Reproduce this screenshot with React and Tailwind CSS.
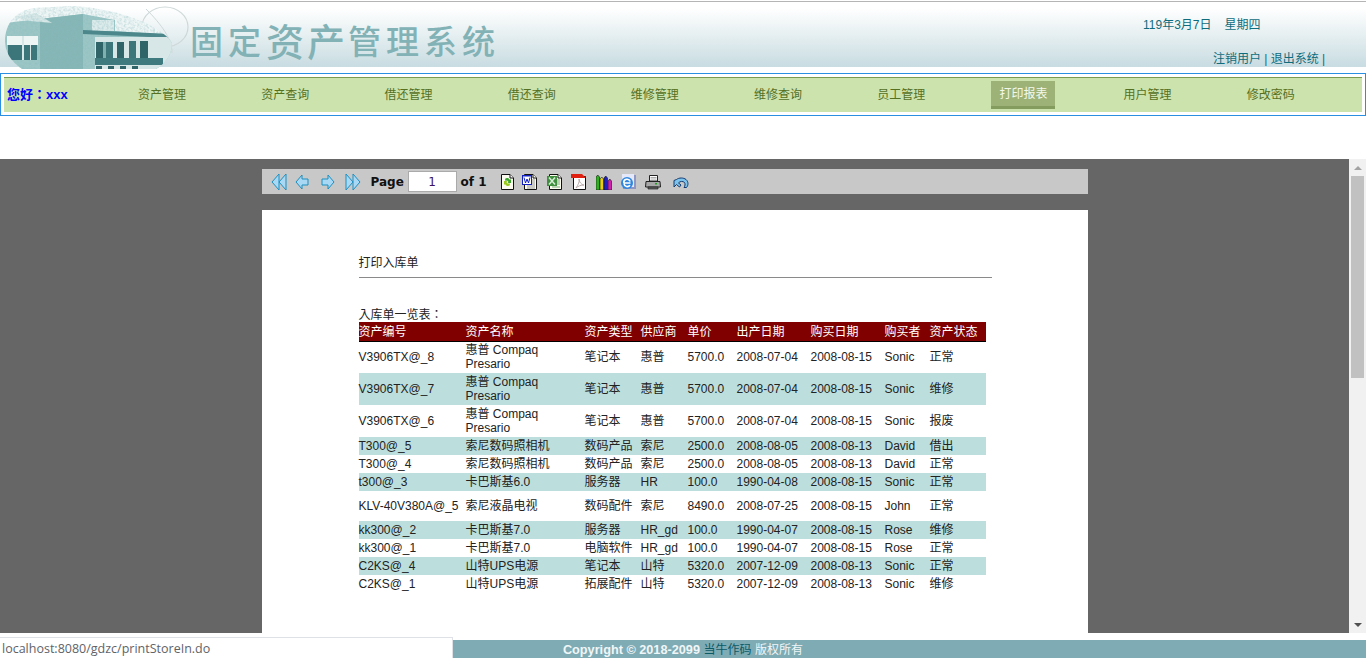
import React from "react";

const NAV = ["资产管理", "资产查询", "借还管理", "借还查询", "维修管理", "维修查询", "员工管理", "打印报表", "用户管理", "修改密码"];

const ROWS = [
  ["V3906TX@_8", "惠普 Compaq Presario", "笔记本", "惠普", "5700.0", "2008-07-04", "2008-08-15", "Sonic", "正常", "h-[32px]", ""],
  ["V3906TX@_7", "惠普 Compaq Presario", "笔记本", "惠普", "5700.0", "2008-07-04", "2008-08-15", "Sonic", "维修", "h-[32px]", "bg-[#bcdfdd]"],
  ["V3906TX@_6", "惠普 Compaq Presario", "笔记本", "惠普", "5700.0", "2008-07-04", "2008-08-15", "Sonic", "报废", "h-[32px]", ""],
  ["T300@_5", "索尼数码照相机", "数码产品", "索尼", "2500.0", "2008-08-05", "2008-08-13", "David", "借出", "h-[18px]", "bg-[#bcdfdd]"],
  ["T300@_4", "索尼数码照相机", "数码产品", "索尼", "2500.0", "2008-08-05", "2008-08-13", "David", "正常", "h-[18px]", ""],
  ["t300@_3", "卡巴斯基6.0", "服务器", "HR", "100.0", "1990-04-08", "2008-08-15", "Sonic", "正常", "h-[18px]", "bg-[#bcdfdd]"],
  ["KLV-40V380A@_5", "索尼液晶电视", "数码配件", "索尼", "8490.0", "2008-07-25", "2008-08-15", "John", "正常", "h-[30px]", ""],
  ["kk300@_2", "卡巴斯基7.0", "服务器", "HR_gd", "100.0", "1990-04-07", "2008-08-15", "Rose", "维修", "h-[18px]", "bg-[#bcdfdd]"],
  ["kk300@_1", "卡巴斯基7.0", "电脑软件", "HR_gd", "100.0", "1990-04-07", "2008-08-15", "Rose", "正常", "h-[18px]", ""],
  ["C2KS@_4", "山特UPS电源", "笔记本", "山特", "5320.0", "2007-12-09", "2008-08-13", "Sonic", "正常", "h-[18px]", "bg-[#bcdfdd]"],
  ["C2KS@_1", "山特UPS电源", "拓展配件", "山特", "5320.0", "2007-12-09", "2008-08-13", "Sonic", "维修", "h-[18px]", ""],
];

const COLS = [107, 119, 56, 47, 49, 74, 74, 45, 56];
const HEAD = ["资产编号", "资产名称", "资产类型", "供应商", "单价", "出产日期", "购买日期", "购买者", "资产状态"];

function Building() {
  return (
    <svg width="190" height="66" viewBox="0 0 190 66" className="shrink-0">
      <defs>
        <clipPath id="blob">
          <path d="M5 38C5 20 16 8 34 5L70 3C110 4 160 20 172 40C172 52 166 60 156 66L22 66C10 58 5 48 5 38Z" />
        </clipPath>
        <filter id="mottle" x="0" y="0" width="100%" height="100%">
          <feTurbulence type="fractalNoise" baseFrequency="0.45" numOctaves="2" seed="4" />
          <feColorMatrix values="0 0 0 0 0.25  0 0 0 0 0.5  0 0 0 0 0.52  0 0 0 1.6 -0.62" />
        </filter>
      </defs>
      <ellipse cx="165" cy="24" rx="23" ry="20" fill="none" stroke="#cfd8d8" strokeWidth="1.2" />
      <path d="M146 6C162 22 172 36 172 50" fill="none" stroke="#cfd8d8" />
      <g clipPath="url(#blob)">
        <rect x="0" y="0" width="190" height="66" fill="#eef5f5" />
        <path d="M5 20L83 11L115 17V28L172 32V66H5Z" fill="#9cc6c6" />
        <path d="M40 16L83 11V66H40Z" fill="#86b6b6" />
        <path d="M14 14L36 10L52 20L30 18Z" fill="#d8e8e8" />
        <rect x="92" y="17" width="22" height="11" fill="#dcebeb" />
        <rect x="5" y="0" width="167" height="66" filter="url(#mottle)" opacity=".55" />
        <path d="M83 27L172 31V35L83 31Z" fill="#4b878b" />
        <rect x="95" y="34" width="77" height="32" fill="#d7e6e6" />
        <rect x="96" y="39" width="7" height="16" fill="#2f6468" />
        <rect x="103" y="39" width="3" height="16" fill="#7fb0b0" />
        <rect x="106" y="39" width="7" height="16" fill="#3d767a" />
        <rect x="117" y="39" width="7" height="16" fill="#2f6468" />
        <rect x="129" y="38" width="7" height="17" fill="#3d767a" />
        <rect x="140" y="38" width="8" height="17" fill="#2f6468" />
        <rect x="95" y="55" width="68" height="7" fill="#3f7a7e" />
        <rect x="96" y="63" width="6" height="3" fill="#2f6468" />
        <rect x="108" y="63" width="6" height="3" fill="#2f6468" />
        <rect x="120" y="63" width="6" height="3" fill="#2f6468" />
        <rect x="132" y="63" width="6" height="3" fill="#2f6468" />
        <rect x="7" y="33" width="31" height="9" fill="#eef5f5" />
        <rect x="8" y="42" width="29" height="15" fill="#3d767a" />
        <rect x="22" y="33" width="2" height="24" fill="#d7e6e6" />
        <rect x="30" y="42" width="1" height="15" fill="#d7e6e6" />
      </g>
    </svg>
  );
}

function Header() {
  return (
    <div className="mt-px h-[66px] border-t border-[#b5b5b5] bg-gradient-to-b from-white from-10% to-[#c8dce1] flex">
      <div className="w-[190px] pt-px flex">
        <Building />
      </div>
      <div className="flex-1 pt-[15px] text-[#82b2b5] font-['Noto_Sans_CJK_SC',sans-serif] font-medium text-[33px] leading-[44px] flex items-center h-[60px] tracking-[5px]">
        <span>固定</span>
        <span className="text-[38px] tracking-[3px]">资产</span>
        <span>管理系统</span>
      </div>
      <div className="w-[223px] text-[12px] text-[#0e6c7c] pt-[15px]">
        <div className="leading-[16px]">119年3月7日<span className="ml-[13px]">星期四</span></div>
        <div className="mt-[18px] pl-[70px] leading-[16px]">注销用户 | 退出系统 |</div>
      </div>
    </div>
  );
}

function Nav() {
  return (
    <div className="mt-[6px] h-[43px] border border-[#2a8fe0] px-[3px] pt-[3px] pb-[3px]">
      <div className="h-[35px] border-t border-[#7b9a50] bg-[#cde3ae] flex items-center">
        <div className="w-[96.5px] pl-[3px] text-[13px] font-bold text-[#0000ff] font-['Liberation_Sans','Noto_Sans_CJK_TC',sans-serif]">您好：xxx</div>
        {NAV.map((n) =>
          n === "打印报表" ? (
            <div key={n} className="w-[123.2px] flex justify-center pr-[2px]">
              <span className="w-[64px] h-[28px] bg-[#9db277] border-b-[3px] border-[#849c5d] text-[#f4f8ea] text-[12px] flex items-center justify-center">{n}</span>
            </div>
          ) : (
            <div key={n} className="w-[123.2px] text-center text-[12px] text-[#55701f]">{n}</div>
          )
        )}
      </div>
    </div>
  );
}

function DoubleArrow({ flip }) {
  return (
    <svg width="16" height="18" viewBox="0 0 16 18" className={flip ? "-scale-x-100" : ""}>
      <path d="M8 1L1 9L8 17V1Z" fill="#a8d8f4" stroke="#1c8fc0" />
      <path d="M15 1L8 9L15 17V1Z" fill="#a8d8f4" stroke="#1c8fc0" />
    </svg>
  );
}

function SingleArrow({ flip }) {
  return (
    <svg width="14" height="16" viewBox="0 0 14 16" className={flip ? "-scale-x-100" : ""}>
      <path d="M7 1L1 8L7 15V11H13V5H7V1Z" fill="#a8d8f4" stroke="#1c8fc0" />
    </svg>
  );
}

function Sheet({ children }) {
  return (
    <svg width="16" height="16" viewBox="0 0 16 16" className="block">
      <path d="M2.500 .5H11L14.500 4V15.500H2.500Z" fill="#fbfbf0" stroke="#111" />
      <path d="M11 .5V4H14.500" fill="#fff" stroke="#111" />
      {children}
    </svg>
  );
}

function Toolbar() {
  return (
    <div className="h-[25px] bg-[#c8c8c8] flex items-center">
      <div className="ml-[9px] shrink-0"><DoubleArrow /></div>
      <div className="ml-[8px] shrink-0"><SingleArrow /></div>
      <div className="ml-[12px] shrink-0"><SingleArrow flip /></div>
      <div className="ml-[10px] shrink-0"><DoubleArrow flip /></div>
      <span className="ml-[10px] w-[37px] shrink-0 text-[12px] font-bold font-['DejaVu_Sans',sans-serif] text-[#111]">Page</span>
      <input
        readOnly
        value="1"
        className="w-[49px] h-[21px] shrink-0 bg-white border border-[#aaaaaa] text-center text-[12px] text-[#401060] font-['DejaVu_Sans',sans-serif]"
      />
      <span className="ml-[4px] w-[26px] shrink-0 whitespace-nowrap text-[12px] font-bold font-['DejaVu_Sans',sans-serif] text-[#111]">of 1</span>

      {/* reload */}
      <div className="ml-[12px] shrink-0">
        <Sheet>
          <path d="M6 5a3 3 0 0 1 5 1l1-1v4H8.500l1-1a2 2 0 0 0-3-1Z" fill="#3aa82a" />
          <path d="M11 11a3 3 0 0 1-5-1l-1 1V7h3.500l-1 1a2 2 0 0 0 3 1Z" fill="#9ac81c" />
        </Sheet>
      </div>
      {/* word */}
      <div className="ml-[7px] shrink-0">
        <Sheet>
          <path d="M10 6h3M10 8h3M10 10h3M5 12h8M5 14h8" stroke="#9a9a9a" />
          <rect x="0" y="1" width="10" height="10" fill="#1020c0" />
          <rect x="1" y="2.500" width="8" height="7.500" fill="#fff" />
          <path d="M2 3.500L3.500 9L5 5L6.500 9L8 3.500" fill="none" stroke="#1020c0" />
        </Sheet>
      </div>
      {/* excel */}
      <div className="ml-[9px] shrink-0">
        <Sheet>
          <rect x="0" y="2" width="10" height="10" fill="#3f8f3f" />
          <path d="M2 3.500L8 10.500M8 3.500L2 10.500" stroke="#d8ecd8" strokeWidth="1.500" />
          <path d="M10 6h3M10 8h3M10 10h3M5 13h8" stroke="#7aa87a" />
        </Sheet>
      </div>
      {/* pdf */}
      <div className="ml-[8px] shrink-0">
        <svg width="16" height="16" viewBox="0 0 16 16" className="block">
          <path d="M2.500 2.500H14.500V15.500H2.500Z" fill="#fff" stroke="#111" />
          <rect x="0" y="0" width="11" height="4" fill="#e02010" />
          <path d="M11 0L15 4H11Z" fill="#e02010" />
          <path d="M5 14C7 11 9 7 8 5C8 8 11 11 13 11C10 11 7 12 5 14Z" fill="none" stroke="#b8a8a8" />
        </svg>
      </div>
      {/* chart */}
      <div className="ml-[9px] shrink-0">
        <svg width="16" height="16" viewBox="0 0 16 16" className="block">
          <path d="M0 3L1.750 1L3.500 3V16H0Z" fill="#30b020" stroke="#111" strokeWidth=".6" />
          <path d="M4 5L5.750 3L7.500 5V16H4Z" fill="#e8d010" stroke="#111" strokeWidth=".6" />
          <path d="M8 4L9.750 2L11.500 4V16H8Z" fill="#2020c0" stroke="#111" strokeWidth=".6" />
          <path d="M12 7L13.750 5L15.500 7V16H12Z" fill="#d020b0" stroke="#111" strokeWidth=".6" />
        </svg>
      </div>
      {/* html */}
      <div className="ml-[8px] shrink-0">
        <svg width="16" height="16" viewBox="0 0 16 16" className="block">
          <rect x="3" y="1" width="13" height="14" fill="#8e97c4" />
          <rect x="2" y="0" width="12" height="13" fill="#e4e8f8" />
          <circle cx="7" cy="9" r="6" fill="#2f86de" />
          <path d="M3.500 9H10.500M3.800 9a3.300 3.300 0 0 1 6.400 -1.500M10 11.200a3.300 3.300 0 0 1-6-1.500" fill="none" stroke="#fff" strokeWidth="1.600" />
        </svg>
      </div>
      {/* print */}
      <div className="ml-[9px] shrink-0">
        <svg width="16" height="16" viewBox="0 0 16 16" className="block">
          <path d="M4.500 1.500H12.500V7H4.500Z" fill="#fff" stroke="#222" />
          <path d="M1 7.500H15L15.500 13H.5Z" fill="#a8a8a8" stroke="#222" />
          <path d="M3 13H13V15H3Z" fill="#606060" stroke="#222" strokeWidth=".7" />
          <rect x="10" y="9" width="2" height="1.500" fill="#20a020" />
          <path d="M5.500 3.500H11.500M5.500 5H11.500" stroke="#888" strokeWidth=".7" />
        </svg>
      </div>
      {/* back */}
      <div className="ml-[12px] shrink-0">
        <svg width="16" height="14" viewBox="0 0 16 14" className="block">
          <path d="M1 5.500L1 12L3.500 9.500L6.500 12L8 10L5.500 8C7 6 10 6 11.500 7.500C12.500 9 12 11 11 12.500L13.500 12.500C15.500 10.500 15.500 6.500 13 4.500C10.500 2.500 6 2.500 3.500 4.500Z" fill="#7cc4ee" stroke="#123a70" />
        </svg>
      </div>
    </div>
  );
}

function Report() {
  return (
    <div className="h-[423px] mt-[16px] bg-white pl-[97px] pr-[96px] text-[12px] text-[#222] font-['Liberation_Sans','Noto_Sans_CJK_SC',sans-serif] overflow-hidden">
      <div className="pt-[45px] leading-[16px]">打印入库单</div>
      <div className="mt-[6px] border-t border-[#8a8a8a]" />
      <div className="mt-[30px] h-[14px] leading-[15px] font-['Liberation_Sans','Noto_Sans_CJK_TC',sans-serif]">入库单一览表：</div>
      <table className="w-[627px] table-fixed border-collapse">
        <colgroup>
          {COLS.map((w, i) => (
            <col key={i} style={{ width: w }} />
          ))}
        </colgroup>
        <thead>
          <tr className="h-[19px] bg-[#800000] border-b border-black text-white">
            {HEAD.map((h) => (
              <th key={h} className="p-0 pt-[2px] leading-[14px] font-normal text-left whitespace-nowrap">{h}</th>
            ))}
          </tr>
        </thead>
        <tbody>
          {ROWS.map((r) => (
            <tr key={r[0]} className={r[9] + " " + r[10]}>
              {r.slice(0, 9).map((c, i) => (
                <td key={i} className="p-0 pr-[4px] leading-[14px] align-middle">{c}</td>
              ))}
            </tr>
          ))}
        </tbody>
      </table>
    </div>
  );
}

function Scrollbar() {
  return (
    <div className="w-[17px] bg-[#f1f1f1] flex flex-col items-center">
      <div className="h-[17px] flex items-center justify-center">
        <div className="w-0 h-0 border-x-[4px] border-x-transparent border-b-[4px] border-b-[#a3a3a3]" />
      </div>
      <div className="w-[13px] h-[202px] bg-[#c1c1c1]" />
      <div className="flex-1" />
      <div className="h-[17px] flex items-center justify-center">
        <div className="w-0 h-0 border-x-[4px] border-x-transparent border-t-[4px] border-t-[#505050]" />
      </div>
    </div>
  );
}

export default function App() {
  return (
    <div className="relative h-[658px] overflow-hidden bg-white font-['Liberation_Sans','Noto_Sans_CJK_SC',sans-serif]">
      <Header />
      <Nav />
      <div className="mt-[43px] h-[474px] bg-[#666666] flex">
        <div className="flex-1 flex flex-col items-center pt-[10px]">
          <div className="w-[826px]">
            <Toolbar />
            <Report />
          </div>
        </div>
        <Scrollbar />
      </div>
      <div className="mt-[7px] h-[18px] bg-[#7fabb5] text-center text-[12.7px] font-bold leading-[20px] text-[#f0f6f7]">
        Copyright © 2018-2099 <span className="text-[12px] text-[#0b5a66] font-normal">当牛作码</span> <span className="text-[12px] font-normal">版权所有</span>
      </div>
      {/* browser status bubble */}
      <div className="absolute left-0 bottom-0 w-[453px] h-[21px] bg-white border-t border-r border-[#dee1e6] pl-[2px] text-[12.5px] leading-[21px] text-[#5f6368] font-['Open_Sans',sans-serif]">
        localhost:8080/gdzc/printStoreIn.do
      </div>
    </div>
  );
}
